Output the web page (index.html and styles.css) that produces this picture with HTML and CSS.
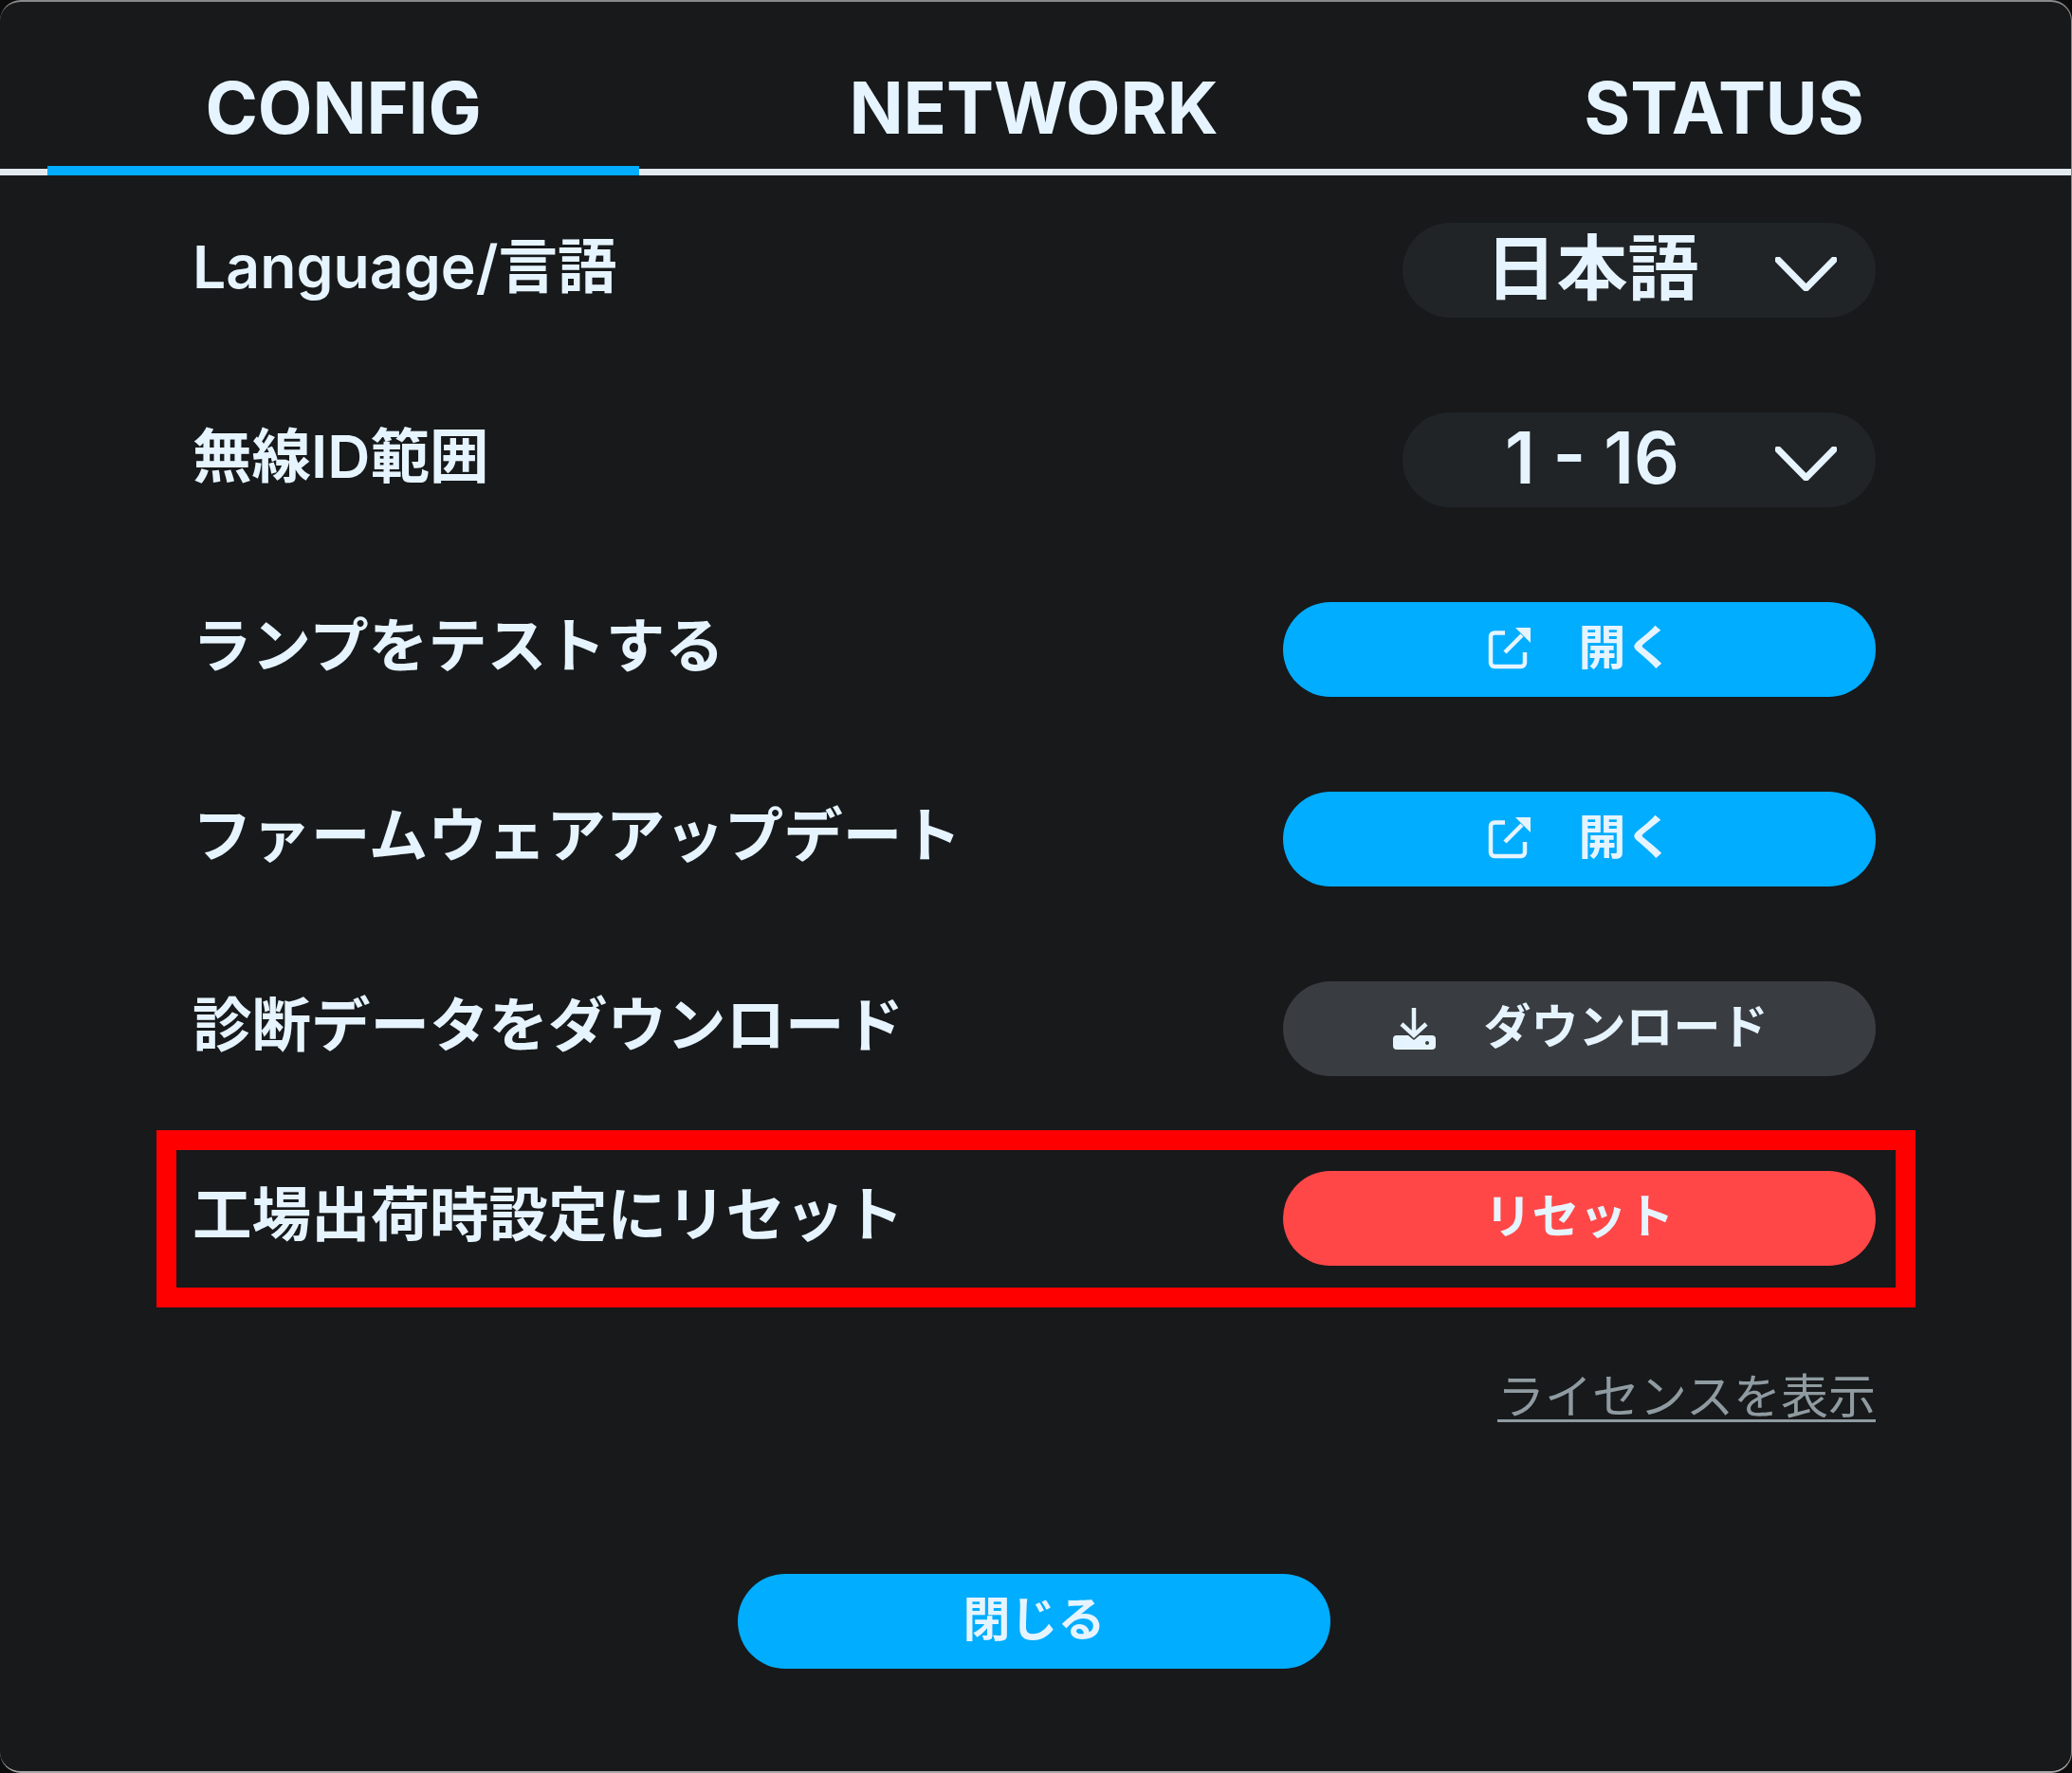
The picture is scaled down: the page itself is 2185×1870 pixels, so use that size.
FILE: index.html
```html
<!DOCTYPE html>
<html lang="ja">
<head>
<meta charset="utf-8">
<title>CONFIG</title>
<link rel="stylesheet" href="styles.css">
</head>
<body>
<main class="dialog">
  <nav class="tabs">
    <div class="tab active">CONFIG</div>
    <div class="tab">NETWORK</div>
    <div class="tab">STATUS</div>
  </nav>
  <section class="rows">
    <div class="row">
      <span class="label">Language/言語</span>
      <div class="select"><span>日本語</span>
        <svg class="chev" viewBox="0 0 65 36"><path d="M3 3 L32.5 33 L62 3"/></svg>
      </div>
    </div>
    <div class="row">
      <span class="label">無線ID範囲</span>
      <div class="select"><span>1 - 16</span>
        <svg class="chev" viewBox="0 0 65 36"><path d="M3 3 L32.5 33 L62 3"/></svg>
      </div>
    </div>
    <div class="row">
      <span class="label">ランプをテストする</span>
      <button class="btn blue">
        <svg class="ico" viewBox="0 -2 50 50"><path class="ln" d="M20 5.5 H9 a4 4 0 0 0 -4 4 V37 a4 4 0 0 0 4 4 H37 a4 4 0 0 0 4 -4 V26"/><path class="ln" d="M20 26 L38 8"/><path class="fl" d="M31 0 H47 V16 Z"/></svg>
        <span>開く</span>
      </button>
    </div>
    <div class="row">
      <span class="label">ファームウェアアップデート</span>
      <button class="btn blue">
        <svg class="ico" viewBox="0 -2 50 50"><path class="ln" d="M20 5.5 H9 a4 4 0 0 0 -4 4 V37 a4 4 0 0 0 4 4 H37 a4 4 0 0 0 4 -4 V26"/><path class="ln" d="M20 26 L38 8"/><path class="fl" d="M31 0 H47 V16 Z"/></svg>
        <span>開く</span>
      </button>
    </div>
    <div class="row">
      <span class="label">診断データをダウンロード</span>
      <button class="btn gray">
        <svg class="ico" viewBox="1 0 50 50"><path class="ln" d="M25 3 V32 M12 20 L25 32 L38 20"/><path class="fl" fill-rule="evenodd" d="M6 32 H19 L25 37 L31 32 H44 a4 4 0 0 1 4 4 V43 a4 4 0 0 1 -4 4 H7 a4 4 0 0 1 -4 -4 V36 a4 4 0 0 1 3 -4 Z M39 38 a2 2 0 1 0 .01 0 Z"/></svg>
        <span>ダウンロード</span>
      </button>
    </div>
    <div class="row">
      <span class="label">工場出荷時設定にリセット</span>
      <button class="btn red"><span>リセット</span></button>
      <div class="mark"></div>
    </div>
  </section>
  <div class="license-line"><a class="license">ライセンスを表示</a></div>
  <div class="footer"><button class="btn blue close"><span>閉じる</span></button></div>
</main>
</body>
</html>
```
FILE: styles.css
```css
* { box-sizing: border-box; }
html, body { margin: 0; height: 100%; background: #0c0c0d; }
body { width: 2185px; height: 1870px; overflow: hidden; }
.dialog {
  width: 2185px; height: 1870px;
  display: flex; flex-direction: column;
  background: #17191b;
  color: #e6f4ff;
  font-family: Inter, "Noto Sans CJK JP", sans-serif;
  border-radius: 22px;
  border-top: 2px solid #8a8a8a;
  border-bottom: 2px solid #a8a8a8;
  border-right: 1px solid #8a8a8a;
}
.tabs {
  display: flex; gap: 104px;
  height: 183px;
  padding-left: 50px;
  border-bottom: 7px solid #e2eaf0;
  flex: none;
}
.tab {
  width: 624px; height: 183px;
  padding-top: 73px;
  text-align: center;
  font-size: 75px; font-weight: 700; line-height: 78px;
  letter-spacing: -0.1px;
  border-bottom: 10px solid transparent;
}
.tab.active { border-bottom-color: #00adff; }
.rows {
  display: flex; flex-direction: column; gap: 100px;
  padding: 50px 206px 0 203px;
}
.row {
  position: relative;
  height: 100px;
  display: flex; align-items: center; justify-content: space-between;
}
.label {
  font-size: 62.5px; font-weight: 600; line-height: 90px;
  margin-top: -8px;
  white-space: nowrap;
}
.select {
  position: relative;
  width: 499px; height: 100px;
  border-radius: 50px;
  background: #202427;
  padding-right: 99px;
  display: flex; align-items: center; justify-content: center;
  font-size: 75px; font-weight: 600;
}
.select span { line-height: 100px; margin-top: -4px; }
.chev {
  position: absolute; right: 41px; top: 36px;
  width: 65px; height: 36px;
  fill: none; stroke: #e6f4ff; stroke-width: 7px; stroke-linecap: round; stroke-linejoin: round;
}
.btn {
  width: 625px; height: 100px;
  border: 0; padding: 0;
  border-radius: 50px;
  color: #e6f4ff;
  font-family: inherit;
  font-size: 50px; font-weight: 600;
  display: flex; align-items: center; justify-content: center; gap: 48px;
}
.btn span { line-height: 70px; margin-top: -4px; }
.blue { background: #00adff; }
.gray { background: #393c40; }
.red { background: #ff4747; }
.ico { width: 50px; height: 50px; overflow: visible; }
.ln { fill: none; stroke: #e6f4ff; stroke-width: 4.5px; }
.fl { fill: #e6f4ff; }
.mark {
  position: absolute;
  left: -38px; right: -42px; top: -43px; bottom: -44px;
  border: 21px solid #ff0000;
  pointer-events: none;
}
.license-line {
  display: flex; justify-content: flex-end;
  padding: 108px 206px 0 0;
}
.license {
  font-size: 50px; font-weight: 400; line-height: 60px;
  color: #8f9ba1;
  text-decoration: underline;
  text-decoration-thickness: 3px;
  text-underline-offset: 6px;
}
.footer { display: flex; justify-content: center; margin-top: 157px; padding-right: 3px; }
```
